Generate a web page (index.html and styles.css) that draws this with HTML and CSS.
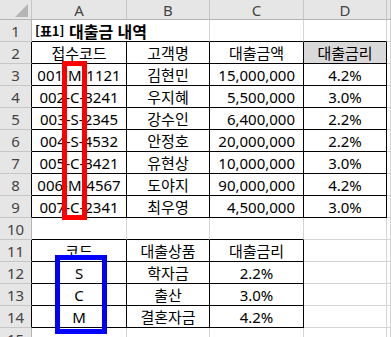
FILE: index.html
```html
<!DOCTYPE html>
<html lang="ko">
<head>
<meta charset="utf-8">
<link rel="stylesheet" href="styles.css">
</head>
<body>
<div class="sheet">
  <div class="grid">
    <div class="corner"><svg class="tri" width="13" height="13" viewBox="0 0 13 13"><polygon points="13,0 13,13 0,13" fill="#b5b5b5"/></svg></div>
    <div class="ch">A</div><div class="ch">B</div><div class="ch">C</div><div class="ch">D</div><div class="ch"></div>

    <div class="rh">1</div><div class="c title span2 bb"><span class="tag">[표1]</span>&nbsp;대출금 내역</div><div class="c bb"></div><div class="c bb"></div><div class="c"></div>

    <div class="rh br">2</div><div class="c bb br">접수코드</div><div class="c bb br">고객명</div><div class="c bb br">대출금액</div><div class="c bb br fill">대출금리</div><div class="c"></div>

    <div class="rh br">3</div><div class="c bb br">001-M-1121</div><div class="c bb br">김현민</div><div class="c bb br num">15,000,000</div><div class="c bb br">4.2%</div><div class="c"></div>
    <div class="rh br">4</div><div class="c bb br">002-C-3241</div><div class="c bb br">우지혜</div><div class="c bb br num">5,500,000</div><div class="c bb br">3.0%</div><div class="c"></div>
    <div class="rh br">5</div><div class="c bb br">003-S-2345</div><div class="c bb br">강수인</div><div class="c bb br num">6,400,000</div><div class="c bb br">2.2%</div><div class="c"></div>
    <div class="rh br">6</div><div class="c bb br">004-S-4532</div><div class="c bb br">안정호</div><div class="c bb br num">20,000,000</div><div class="c bb br">2.2%</div><div class="c"></div>
    <div class="rh br">7</div><div class="c bb br">005-C-3421</div><div class="c bb br">유현상</div><div class="c bb br num">10,000,000</div><div class="c bb br">3.0%</div><div class="c"></div>
    <div class="rh br">8</div><div class="c bb br">006-M-4567</div><div class="c bb br">도야지</div><div class="c bb br num">90,000,000</div><div class="c bb br">4.2%</div><div class="c"></div>
    <div class="rh br">9</div><div class="c bb br">007-C-2341</div><div class="c bb br">최우영</div><div class="c bb br num">4,500,000</div><div class="c bb br">3.0%</div><div class="c"></div>

    <div class="rh">10</div><div class="c bb"></div><div class="c bb"></div><div class="c bb"></div><div class="c"></div><div class="c"></div>

    <div class="rh br">11</div><div class="c bb br">코드</div><div class="c bb br">대출상품</div><div class="c bb br">대출금리</div><div class="c"></div><div class="c"></div>
    <div class="rh br">12</div><div class="c bb br">S</div><div class="c bb br">학자금</div><div class="c bb br">2.2%</div><div class="c"></div><div class="c"></div>
    <div class="rh br">13</div><div class="c bb br">C</div><div class="c bb br">출산</div><div class="c bb br">3.0%</div><div class="c"></div><div class="c"></div>
    <div class="rh br">14</div><div class="c bb br">M</div><div class="c bb br">결혼자금</div><div class="c bb br">4.2%</div><div class="c"></div><div class="c"></div>

    <div class="rh">15</div><div class="c"></div><div class="c"></div><div class="c"></div><div class="c"></div><div class="c"></div>
  </div>
  <div class="mark red"></div>
  <div class="mark blue"></div>
</div>
</body>
</html>
```

FILE: styles.css
```css
html, body {
  margin: 0;
  padding: 0;
  background: #fff;
}
body {
  font-family: "Noto Sans", "Noto Sans CJK KR", sans-serif;
  font-size: 15px;
  color: #000;
}
.sheet {
  position: relative;
  width: 391px;
  height: 337px;
  overflow: hidden;
}
.grid {
  display: grid;
  grid-template-columns: 32px 95px 83px 94px 83px 1fr;
  grid-template-rows: 20px repeat(15, 22px);
}
.grid > div {
  box-sizing: border-box;
  border-right: 1px solid #d4d4d4;
  border-bottom: 1px solid #d4d4d4;
  display: flex;
  align-items: center;
  justify-content: center;
  white-space: nowrap;
  line-height: 20px;
}
.grid > .ch,
.grid > .rh,
.grid > .corner {
  background: #e6e6e6;
  color: #444;
  border-right-color: #c6c6c6;
  border-bottom-color: #b4b4b4;
}
.grid > .rh {
  border-bottom-color: #c6c6c6;
  border-right-color: #b4b4b4;
}
.grid > .corner {
  align-items: flex-end;
  justify-content: flex-end;
  padding: 0 3px 2px 0;
}
.tri { display: block; }
.grid > .bb { border-bottom-color: #000; }
.grid > .br { border-right-color: #000; }
.grid > .span2 { grid-column: span 2; }
.grid > .title {
  justify-content: flex-start;
  padding-left: 3px;
  font-weight: bold;
  font-size: 16px;
  font-family: "Noto Sans CJK KR", sans-serif;
}
.tag { font-size: 13px; }
.grid > .num {
  justify-content: flex-end;
  padding-right: 8px;
}
.grid > .fill { background: #d9d9d9; }
.mark {
  position: absolute;
  box-sizing: border-box;
  border: 5px solid;
}
.red {
  left: 62px;
  top: 61px;
  width: 25px;
  height: 159px;
  border-color: #ff0000;
}
.blue {
  left: 55px;
  top: 255px;
  width: 52px;
  height: 79px;
  border-color: #0000ff;
}
```
